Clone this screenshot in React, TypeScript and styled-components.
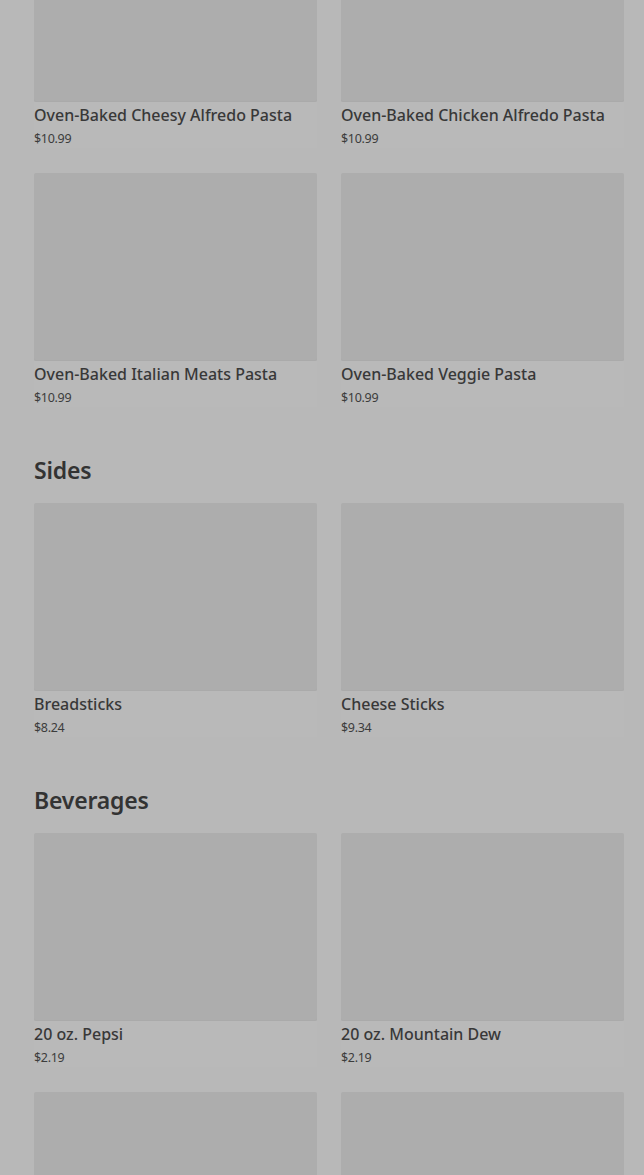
import styled, { createGlobalStyle } from 'styled-components';

interface MenuItem {
    name: string;
    price: string;
}

interface MenuSection {
    title?: string;
    items: MenuItem[];
}

const sections: MenuSection[] = [
    {
        items: [
            { name: 'Oven-Baked Cheesy Alfredo Pasta', price: '$10.99' },
            { name: 'Oven-Baked Chicken Alfredo Pasta', price: '$10.99' },
            { name: 'Oven-Baked Italian Meats Pasta', price: '$10.99' },
            { name: 'Oven-Baked Veggie Pasta', price: '$10.99' },
        ],
    },
    {
        title: 'Sides',
        items: [
            { name: 'Breadsticks', price: '$8.24' },
            { name: 'Cheese Sticks', price: '$9.34' },
        ],
    },
    {
        title: 'Beverages',
        items: [
            { name: '20 oz. Pepsi', price: '$2.19' },
            { name: '20 oz. Mountain Dew', price: '$2.19' },
            { name: '20 oz. Diet Pepsi', price: '$2.19' },
            { name: '20 oz. Starry', price: '$2.19' },
        ],
    },
];

const App = () => {
    return (
        <>
            <GlobalStyle />
            <Page>
                {sections.map((section, i) => (
                    <Section key={i}>
                        {section.title && <SectionTitle>{section.title}</SectionTitle>}
                        <Grid>
                            {section.items.map(item => (
                                <Card key={item.name}>
                                    <CardImage />
                                    <CardTitle>{item.name}</CardTitle>
                                    <CardPrice>{item.price}</CardPrice>
                                </Card>
                            ))}
                        </Grid>
                    </Section>
                ))}
            </Page>
        </>
    );
};

export default App;

const GlobalStyle = createGlobalStyle`
    html, body {
        margin: 0;
        padding: 0;
        background: #b8b8b8;
        overflow: hidden;
    }
    body {
        font-family: "Noto Sans", "Liberation Sans", sans-serif;
        color: #343434;
    }
`;

const Page = styled.div`
    height: 1175px;
    overflow: hidden;
    padding: 0 20px 0 34px;
    box-sizing: border-box;
    > div:first-child {
        margin-top: -86px;
    }
`;

const Section = styled.div`
    display: flex;
    flex-direction: column;
    & + & {
        margin-top: 47px;
    }
`;

const SectionTitle = styled.h2`
    margin: 0 0 17px 0;
    font-size: 23px;
    line-height: 32px;
    font-weight: 600;
    letter-spacing: -0.2px;
    color: #333333;
`;

const Grid = styled.div`
    display: grid;
    grid-template-columns: 283px 283px;
    column-gap: 24px;
    row-gap: 25px;
`;

const Card = styled.div`
    display: flex;
    flex-direction: column;
    background: #b9b9b9;
`;

const CardImage = styled.div`
    height: 188px;
    background: #adadad;
    border-radius: 2px;
    box-shadow: inset 0 -1px 0 #aaaaaa;
`;

const CardTitle = styled.p`
    margin: 3px 0 0 0;
    font-size: 16px;
    line-height: 21px;
    font-weight: 500;
    color: #383838;
    letter-spacing: 0;
`;

const CardPrice = styled.p`
    margin: 4px 0 0 0;
    font-size: 12.5px;
    line-height: 18px;
    color: #3c3c3c;
    letter-spacing: -0.3px;
`;
